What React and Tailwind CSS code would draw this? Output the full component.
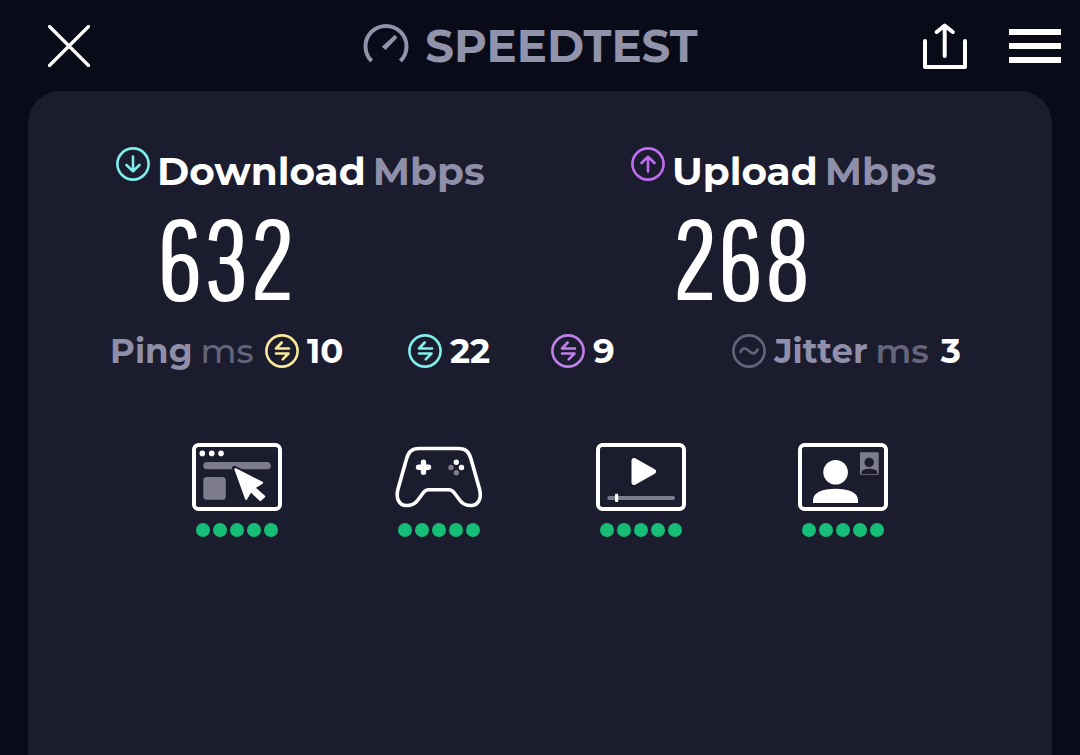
import React from 'react';

const pings = [
    { id: 'idle', label: 'Idle ping', value: 10, color: 'text-[#f9e79a]' },
    { id: 'download', label: 'Download ping', value: 22, color: 'text-[#7eeeea]' },
    { id: 'upload', label: 'Upload ping', value: 9, color: 'text-[#bf80ea]' },
];

const CloseIcon = () => (
    <svg width="42" height="42" viewBox="0 0 42 42" fill="none" stroke="currentColor" strokeWidth="3.2" strokeLinecap="round">
        <path d="M1.5 1.5 40.5 40.5M40.5 1.5 1.5 40.5" />
    </svg>
);

const GaugeIcon = () => (
    <svg width="46" height="46" viewBox="0 0 46 46" fill="none" aria-hidden="true">
        <path d="M8.6 38A20.5 20.5 0 1 1 37.4 38" stroke="currentColor" strokeWidth="4" />
        <path d="M31.7 12 34.5 14.4 22.6 27 18.8 23.8Z" fill="currentColor" />
    </svg>
);

const ShareIcon = () => (
    <svg width="44" height="46" viewBox="0 0 44 46" fill="none" stroke="currentColor" strokeWidth="4" strokeLinecap="round">
        <path d="M2 18V44H42V18" strokeLinejoin="round" />
        <path d="M21.7 33V3M13.7 9 21.7 2.5 29.7 9" strokeLinejoin="round" />
    </svg>
);

const MenuIcon = () => (
    <svg width="52" height="36" viewBox="0 0 52 36" fill="currentColor">
        <path d="M0 1H52V7H0ZM0 15H52V21H0ZM0 29H52V35H0Z" />
    </svg>
);

// Round outline shared by all the small metric icons
const CircleIcon = ({ className, children }) => (
    <svg width="34" height="34" viewBox="0 0 34 34" fill="none" stroke="currentColor" strokeWidth="2.6" strokeLinecap="round" strokeLinejoin="round" className={`shrink-0 ${className}`} aria-hidden="true">
        <circle cx="17" cy="17" r="15.6" />
        {children}
    </svg>
);

const BrowserIcon = () => (
    <svg width="90" height="68" viewBox="0 0 90 68" fill="none">
        <rect x="2" y="2" width="86" height="64" rx="4.5" stroke="white" strokeWidth="4" />
        <g fill="white">
            <circle cx="10.3" cy="10.4" r="2.8" />
            <circle cx="19.7" cy="10.4" r="2.8" />
            <circle cx="29" cy="10.4" r="2.8" />
        </g>
        <rect x="11.3" y="19" width="67.5" height="7.3" rx="3.6" fill="#7d7c8a" />
        <rect x="11.3" y="34" width="22.5" height="22.7" rx="3.5" fill="#7d7c8a" />
        <path d="M42.5 25.3 71 39.7 62.5 44.7 72.7 53.5 68.3 57.5 58.8 48.5 54 56.5Z" fill="white" stroke="#1b1c2e" strokeWidth="5" strokeLinejoin="round" />
        <path d="M43.5 26.3 70 39.7 62 44.7 72.2 53.5 68.3 57 58.8 48 54.2 55.8Z" fill="white" stroke="white" strokeWidth="2.2" strokeLinejoin="round" />
    </svg>
);

const GamepadIcon = () => (
    <svg width="90" height="68" viewBox="0 0 90 68" fill="none">
        <path d="M25 5.5H64.5C72 5.5 75 9 77 16L85.5 46C88 55 84.5 62.5 77 62.5C72 62.5 68.5 61 66 57.5L60 49.5C58.5 47.5 57.5 46.7 55 46.7H34.5C32 46.7 31 47.5 29.5 49.5L23.5 57.5C21 61 17.5 62.5 12.5 62.5C5 62.5 1.5 55 4 46L12.5 16C14.5 9 17.5 5.5 25 5.5Z" stroke="white" strokeWidth="3.6" strokeLinejoin="round" />
        <path d="M29.5 19.3V29.3M24.5 24.3H34.5" stroke="white" strokeWidth="5.4" strokeLinecap="round" />
        <circle cx="62.3" cy="19.3" r="2.7" fill="white" />
        <circle cx="67.5" cy="24.5" r="2.7" fill="white" />
        <circle cx="57" cy="24.5" r="2.7" fill="#7d7c8a" />
        <circle cx="62.3" cy="29.7" r="2.7" fill="#7d7c8a" />
    </svg>
);

const VideoIcon = () => (
    <svg width="90" height="68" viewBox="0 0 90 68" fill="none">
        <rect x="2" y="2" width="86" height="64" rx="4.5" stroke="white" strokeWidth="4" />
        <path d="M38 17.5 57.5 28.5 38 39.5Z" fill="white" stroke="white" strokeWidth="5" strokeLinejoin="round" />
        <rect x="11.3" y="53" width="67.7" height="4" rx="2" fill="#7d7c8a" />
        <rect x="19" y="50.7" width="3.2" height="8.3" rx="1" fill="white" />
    </svg>
);

const ChatIcon = () => (
    <svg width="90" height="68" viewBox="0 0 90 68" fill="none">
        <rect x="2" y="2" width="86" height="64" rx="4.5" stroke="white" strokeWidth="4" />
        <circle cx="37.6" cy="29.3" r="12.3" fill="white" />
        <path d="M15 60V57C15 49.5 25 45.7 37.5 45.7S60 49.5 60 57V60Z" fill="white" />
        <rect x="62" y="9.3" width="18.7" height="22.5" rx="1" fill="#7d7c8a" />
        <circle cx="71.2" cy="19.4" r="4.7" fill="#1b1c2e" />
        <path d="M63.5 31V29.5C63.5 27 67 25.8 71.3 25.8S79.3 27 79.3 29.5V31Z" fill="#1b1c2e" />
    </svg>
);

const ratings = [
    { id: 'browsing', label: 'Browsing', score: 5, Icon: BrowserIcon },
    { id: 'gaming', label: 'Gaming', score: 5, Icon: GamepadIcon },
    { id: 'streaming', label: 'Streaming', score: 5, Icon: VideoIcon },
    { id: 'chat', label: 'Video chat', score: 5, Icon: ChatIcon },
];

const SpeedResult = ({ label, value, icon }) => (
    <div className="flex gap-[7px]">
        {icon}
        <div>
            <h2 className="mt-1 flex items-baseline gap-[7px] text-[39px] leading-10 font-bold">
                {label} <span className="text-[#8f8fa9]">Mbps</span>
            </h2>
            <p className="mt-5 font-['Pathway_Gothic_One','Saira_Extra_Condensed','Bebas_Neue','Barlow_Condensed',sans-serif] text-[114px] leading-[92px]">{value}</p>
        </div>
    </div>
);

const App = () => {
    return (
        <div className="flex min-h-screen flex-col bg-[#090b18] font-['Montserrat','Inter',sans-serif] text-white">
            {/* Header */}
            <header className="grid h-[91px] grid-cols-[1fr_auto_1fr] items-center pr-[19px]">
                <button type="button" aria-label="Close" className="ml-12 justify-self-start">
                    <CloseIcon />
                </button>
                <h1 className="flex items-center gap-4 text-[45px] font-bold text-[#9193aa]">
                    <GaugeIcon /> SPEEDTEST
                </h1>
                <div className="flex items-center gap-[42px] justify-self-end">
                    <button type="button" aria-label="Share"><ShareIcon /></button>
                    <button type="button" aria-label="Menu"><MenuIcon /></button>
                </div>
            </header>

            <main className="mx-7 flex-1 rounded-t-[32px] bg-[#1b1c2e] pt-14">
                {/* Download / upload speeds */}
                <section className="grid grid-cols-2 gap-x-[94px] pl-22">
                    <SpeedResult
                        label="Download"
                        value={632}
                        icon={<CircleIcon className="text-[#7eeeea]"><path d="M17 9.5V24M10.5 18 17 24.2 23.5 18" /></CircleIcon>}
                    />
                    <SpeedResult
                        label="Upload"
                        value={268}
                        icon={<CircleIcon className="text-[#bf6cf0]"><path d="M17 24.5V10M10.5 16 17 9.8 23.5 16" /></CircleIcon>}
                    />
                </section>

                {/* Latency */}
                <section className="mt-7 flex h-10 items-center pr-[91px] pl-[82px] text-[34px] font-bold">
                    <h3 className="flex w-[155px] shrink-0 gap-2 text-[#8f8fa9]">
                        Ping <span className="font-medium text-[#64657a]">ms</span>
                    </h3>
                    {pings.map((ping) => (
                        <div key={ping.id} className="flex w-[143px] shrink-0 items-center gap-2" aria-label={ping.label}>
                            <CircleIcon className={ping.color}>
                                <path d="M16.7 8.5 11 14.5H24M11 19.5H23.5L17.7 25.3" />
                            </CircleIcon>
                            {ping.value}
                        </div>
                    ))}
                    <div className="ml-auto flex items-center gap-2">
                        <CircleIcon className="text-[#64657a]">
                            <path d="M8.5 18C10.5 13.5 13.5 13.5 17 17S23.5 20.5 25.5 15.5" />
                        </CircleIcon>
                        <h3 className="mr-1 flex gap-2 text-[#8f8fa9]">
                            Jitter <span className="font-semibold text-[#64657a]">ms</span>
                        </h3>
                        <span>3</span>
                    </div>
                </section>

                {/* Experience ratings */}
                <section className="mt-18 grid grid-cols-4 justify-items-center px-27">
                    {ratings.map(({ id, label, score, Icon }) => (
                        <div key={id} role="img" aria-label={`${label}: ${score} of 5`} className="flex flex-col items-center gap-3">
                            <Icon />
                            <div className="flex gap-[3px]">
                                {Array.from({ length: score }, (_, i) => (
                                    <span key={i} className="size-[14px] rounded-full bg-[#16bd76]" />
                                ))}
                            </div>
                        </div>
                    ))}
                </section>
            </main>
        </div>
    );
};

export default App;
